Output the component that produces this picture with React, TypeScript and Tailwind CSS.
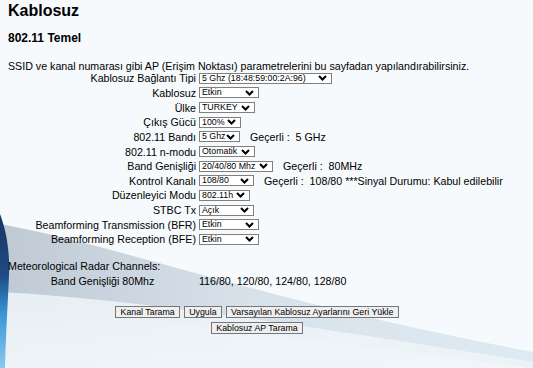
const rows = [
  { label: "Kablosuz Bağlantı Tipi", value: "5 Ghz (18:48:59:00:2A:96)", w: "w-[133px]" },
  { label: "Kablosuz", value: "Etkin", w: "w-[60px]" },
  { label: "Ülke", value: "TURKEY", w: "w-[56px]" },
  { label: "Çıkış Gücü", value: "100%", w: "w-[42px]" },
  { label: "802.11 Bandı", value: "5 Ghz", w: "w-[41px]", note: "Geçerli :\u00a0 5 GHz" },
  { label: "802.11 n-modu", value: "Otomatik", w: "w-[56px]" },
  { label: "Band Genişliği", value: "20/40/80 Mhz", w: "w-[74px]", note: "Geçerli :\u00a0 80MHz" },
  {
    label: "Kontrol Kanalı",
    value: "108/80",
    w: "w-[55px]",
    note: "Geçerli :\u00a0 108/80 ***Sinyal Durumu: Kabul edilebilir",
  },
  { label: "Düzenleyici Modu", value: "802.11h", w: "w-[51px]" },
  { label: "STBC Tx", value: "Açık", w: "w-[55px]" },
  { label: "Beamforming Transmission (BFR)", value: "Etkin", w: "w-[60px]" },
  { label: "Beamforming Reception (BFE)", value: "Etkin", w: "w-[60px]" },
];

function Chevron() {
  return (
    <svg viewBox="0 0 9 6" className="h-[6px] w-[9px] shrink-0">
      <path d="M1 1 L4.5 4.5 L8 1" fill="none" stroke="#000" strokeWidth="2" />
    </svg>
  );
}

function FakeSelect({ value, w }: { value: string; w: string }) {
  return (
    <span
      className={`${w} inline-flex h-[11px] items-center justify-between border border-[#808080] bg-white pl-[2px] pr-[4px] text-[8.8px] leading-none text-black`}
    >
      <span className="whitespace-nowrap">{value}</span>
      <Chevron />
    </span>
  );
}

function Btn({ children }: { children: React.ReactNode }) {
  return (
    <button className="flex h-[12.5px] items-center border border-[#767676] bg-[#efefef] px-[4.5px] text-[8.8px] leading-none whitespace-nowrap text-black">
      {children}
    </button>
  );
}

function Backdrop() {
  return (
    <svg
      className="absolute inset-0 h-full w-full"
      viewBox="0 0 533 368"
      preserveAspectRatio="none"
    >
      <defs>
        <linearGradient id="swoosh" x1="0" y1="0" x2="1" y2="0">
          <stop offset="0" stopColor="#b8c4d0" />
          <stop offset="0.45" stopColor="#d3dee8" />
          <stop offset="1" stopColor="#dce9f2" />
        </linearGradient>
        <linearGradient id="fade" x1="0" y1="0" x2="0" y2="1">
          <stop offset="0" stopColor="#f4f8fb" stopOpacity="0" />
          <stop offset="1" stopColor="#f4f8fb" stopOpacity="1" />
        </linearGradient>
        <linearGradient id="edge" x1="0" y1="0" x2="0" y2="1">
          <stop offset="0" stopColor="#1a355f" />
          <stop offset="0.4" stopColor="#1d4c86" />
          <stop offset="0.65" stopColor="#3b95d8" />
          <stop offset="1" stopColor="#8cc8ef" />
        </linearGradient>
      </defs>
      <path
        d="M0 224 C120 246 260 300 533 352 L533 368 L0 368 Z"
        fill="url(#swoosh)"
        opacity="0.9"
      />
      <path
        d="M0 292 C150 300 330 330 533 362 L533 368 L0 368 Z"
        fill="#eef4f8"
        opacity="0.85"
      />
      <path d="M0 300 L533 368 L0 368 Z" fill="url(#fade)" opacity="0.5" />
      <path
        d="M0 214 C6 230 10 250 9 275 C8 300 6 330 5 368 L0 368 Z"
        fill="url(#edge)"
      />
    </svg>
  );
}

export default function App() {
  return (
    <div className="relative h-[368px] w-[533px] overflow-hidden bg-[#f6fafc] font-['Liberation_Sans',Arial,sans-serif] text-black">
      <Backdrop />
      <div className="relative flex flex-col pt-[2px] pl-[8px]">
        <h1 className="text-[16px] leading-[18px] font-bold">Kablosuz</h1>
        <h2 className="mt-[11.4px] text-[12px] leading-[14px] font-bold">802.11 Temel</h2>
        <p className="mt-[16.9px] text-[10.67px] leading-[9px] whitespace-nowrap">
          SSID ve kanal numarası gibi AP (Erişim Noktası) parametrelerini bu sayfadan
          yapılandırabilirsiniz.
        </p>

        <div className="mt-[-0.4px] grid grid-cols-[188px_1fr] gap-x-[3px] text-[10.67px]">
          {rows.map((row) => (
            <div key={row.label} className="contents">
              <div className="flex h-[14.67px] items-center justify-end whitespace-nowrap">
                {row.label}
              </div>
              <div className="flex h-[14.67px] items-center">
                <FakeSelect value={row.value} w={row.w} />
                {row.note ? (
                  <span className="ml-[10px] whitespace-nowrap">{row.note}</span>
                ) : null}
              </div>
            </div>
          ))}
        </div>

        <p className="mt-[12.6px] text-[10.67px] leading-[14.67px]">
          Meteorological Radar Channels:
        </p>
        <div className="flex pl-[42.7px] text-[10.67px] leading-[14.67px]">
          <span className="w-[148.3px]">Band Genişliği 80Mhz</span>
          <span>116/80, 120/80, 124/80, 128/80</span>
        </div>

        <div className="mt-[17px] flex w-[498px] justify-center gap-[3.5px]">
          <Btn>Kanal Tarama</Btn>
          <Btn>Uygula</Btn>
          <Btn>Varsayılan Kablosuz Ayarlarını Geri Yükle</Btn>
        </div>
        <div className="mt-[3.5px] flex w-[498px] justify-center">
          <Btn>Kablosuz AP Tarama</Btn>
        </div>
      </div>
    </div>
  );
}
